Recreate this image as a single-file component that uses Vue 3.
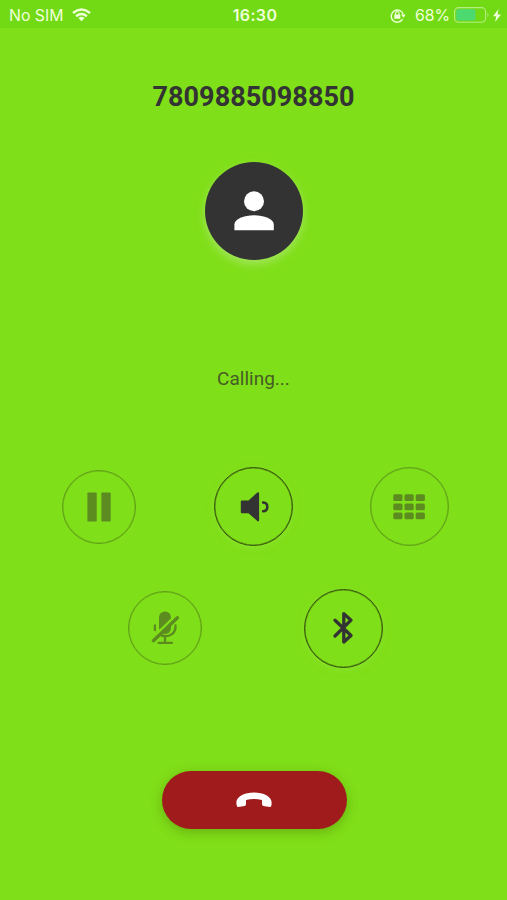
<script setup>
const phone = '7809885098850'
const keys = [0, 1, 2]
</script>

<template>
  <main class="screen">
    <header class="status">
      <div class="carrier">
        <span>No SIM</span>
        <svg class="wifi" viewBox="0 0 20 14" fill="none" stroke="currentColor" stroke-width="2.5">
          <path d="M1 4.9Q10-2.3 19 4.9M4.3 8.3Q10 3.7 15.7 8.3" />
          <path d="M6.7 10.2Q10 7.5 13.3 10.2L10 13.6Z" fill="currentColor" stroke="none" />
        </svg>
      </div>
      <strong class="clock">16:30</strong>
      <div class="power">
        <svg class="lock" viewBox="0 0 16 15" fill="none" stroke="currentColor">
          <path d="M12.6 11.2A6.1 6.1 0 1 1 13.2 6.4" stroke-width="1.4" />
          <path d="M11 6.5H15.6L13.5 9.8Z" fill="currentColor" stroke="none" />
          <rect x="4.3" y="6.5" width="6" height="4.3" rx=".6" fill="currentColor" stroke="none" />
          <path d="M5.5 7V5.4a1.8 1.8 0 0 1 3.6 0V7" stroke-width="1.1" />
        </svg>
        <span class="percent">68%</span>
        <svg class="battery" viewBox="0 0 36 16">
          <rect x=".6" y=".6" width="31" height="14.6" rx="4" fill="none" stroke="#b5ed83" stroke-width="1.1" />
          <rect x="2.3" y="2.3" width="19.2" height="11.2" rx="2" fill="#4cda70" />
          <path d="M33.5 5.5q2 2.3 0 4.8z" fill="#b5ed83" />
        </svg>
        <svg class="bolt" viewBox="0 0 8 13"><path d="M5.6 0L0 7.2H3.2L2.1 13L8 5.5H4.6Z" fill="currentColor" /></svg>
      </div>
    </header>

    <h1 class="number">{{ phone }}</h1>

    <div class="avatar">
      <svg viewBox="0 0 40 40" fill="#fff">
        <circle cx="20" cy="10.2" r="10" />
        <path d="M.4 39.2V33.4C.4 28 10 24.2 20 24.2S39.8 28 39.8 33.4V39.2Z" />
      </svg>
    </div>

    <p class="state">Calling...</p>

    <div class="controls first">
      <button class="control small dim" aria-label="Hold">
        <svg viewBox="0 0 40 40"><rect x="8.4" y="5.4" width="9.3" height="29.2" rx=".8" /><rect x="22.4" y="5.4" width="9.3" height="29.2" rx=".8" /></svg>
      </button>
      <button class="control" aria-label="Speaker">
        <svg viewBox="0 0 40 40">
          <path d="M6.8 14.6Q6.8 13.6 7.8 13.6H14.5L23.3 5.5Q25.1 4.5 25.1 6.3V33Q25.1 35.1 23.3 34L14.5 26.3H7.8Q6.8 26.3 6.8 25.3Z" />
          <path d="M29.1 15.4Q33.3 15.5 33.3 19.8T29.1 24.2" class="line" stroke-width="2.5" />
        </svg>
      </button>
      <button class="control dim" aria-label="Keypad">
        <svg viewBox="0 0 40 40">
          <template v-for="row in keys" :key="row">
            <rect v-for="col in keys" :key="col" :x="4.3 + col * 11.2" :y="7.3 + row * 9.1" width="9.2" height="6.8" rx="1.5" />
          </template>
        </svg>
      </button>
    </div>

    <div class="controls second">
      <button class="control small dim" aria-label="Mute">
        <svg viewBox="0 0 40 40">
          <rect x="14" y="3.5" width="12" height="22.5" rx="6" />
          <path d="M9.9 17.5V22.2M30.5 17.5C31 25.5 24 30 16.5 27.4M20 28.5V34M13.6 34.8H27" class="line" stroke-width="2.3" />
          <path d="M6.8 31.2L31.2 7.8" class="line gap" stroke-width="3.4" stroke-linecap="butt" />
          <path d="M8.4 32.7L32.4 9.7" class="line" stroke-width="3.3" stroke-linecap="butt" />
        </svg>
      </button>
      <button class="control" aria-label="Bluetooth">
        <svg viewBox="0 0 40 40">
          <path d="M12 12.2L28 27.5L20.8 34V5.6L28 12.2L12 28" class="line" stroke-width="3.3" />
        </svg>
      </button>
    </div>

    <button class="hangup" aria-label="End call">
      <svg viewBox="0 0 36 16" fill="#fff">
        <path d="M.4 10.7C.2 4.6 8.4.5 18 .5S35.8 4.6 35.6 10.7Q35.7 14.8 34 15L27.3 13.9Q26 13.6 26 12.2V8.1Q18 5.8 10 8.1V12.2Q10 13.6 8.7 13.9L2 15Q.5 14.8 .4 10.7Z" />
      </svg>
    </button>
  </main>
</template>

<style>
body { margin: 0; background: #7fdf18; }
</style>

<style scoped>
.screen {
  box-sizing: border-box;
  width: 507px;
  height: 900px;
  overflow: hidden;
  display: flex;
  flex-direction: column;
  align-items: center;
  background: #7fdf18;
  font-family: Roboto, sans-serif;
  color: #333;
}
.status {
  box-sizing: border-box;
  width: 100%;
  height: 28px;
  flex: none;
  display: grid;
  grid-template-columns: 1fr auto 1fr;
  align-items: center;
  padding: 2px 6px 0 9px;
  background: #72da15;
  color: #efffd9;
  font: 16px/26px Inter, sans-serif;
}
.carrier, .power { display: flex; align-items: center; }
.carrier { gap: 9px; font-size: 15.8px; padding-top: 1px; }
.carrier .wifi { margin-top: -2px; }
.power { justify-content: flex-end; }
.wifi { width: 19px; height: 14px; }
.clock { font-size: 16px; font-weight: 600; letter-spacing: .35px; padding-bottom: 1px; }
.lock { width: 16px; height: 15px; margin-right: 9px; margin-top: -1px; }
.percent { margin-right: 4px; font-size: 15.8px; }
.battery { width: 36px; height: 16px; margin-right: 3px; margin-top: -1px; }
.bolt { width: 8px; height: 13px; margin-top: -1px; }
.number {
  margin: 51px 0 0;
  font-size: 27px;
  line-height: 36px;
  font-weight: 700;
  letter-spacing: .05px;
}
.avatar {
  width: 98px;
  height: 98px;
  flex: none;
  margin: 46.5px 0 0 1px;
  border-radius: 50%;
  background: #333;
  display: flex;
  align-items: center;
  justify-content: center;
  box-shadow: 0 4px 10px rgba(190, 235, 145, .6);
}
.avatar svg { width: 40px; height: 40px; }
.state {
  margin: 107.5px 0 0;
  font-size: 19px;
  line-height: 24px;
  color: #465c25;
}
.controls { display: flex; align-items: center; flex: none; height: 79px; }
.first { gap: 76.5px; margin: 76px 0 0 3.5px; }
.first .small { margin-right: 1.5px; }
.second { gap: 102px; margin: 42.5px 0 0 3px; }
.control {
  box-sizing: border-box;
  width: 79px;
  height: 79px;
  flex: none;
  padding: 0;
  display: flex;
  align-items: center;
  justify-content: center;
  border: 1px solid #36500f;
  border-radius: 50%;
  background: transparent;
  color: #333;
  box-shadow: inset 0 0 0 .5px rgba(54, 80, 15, .6), 0 2px 7px rgba(150, 232, 65, .5);
}
.small { width: 74px; height: 74px; }
.dim {
  border-color: #609e19;
  color: #5c8b20;
  box-shadow: inset 0 0 0 .5px rgba(96, 158, 25, .6);
}
.control svg { width: 40px; height: 40px; flex: none; fill: currentColor; }
.control .line { fill: none; stroke: currentColor; stroke-linecap: round; stroke-linejoin: round; }
.control .gap { stroke: #7fdf18; }
.hangup {
  width: 185px;
  height: 58px;
  flex: none;
  margin: 103px 0 0 1px;
  padding: 0;
  display: flex;
  align-items: center;
  justify-content: center;
  border: 0;
  border-radius: 29px;
  background: #a01c1c;
  box-shadow: 0 3px 12px rgba(70, 90, 10, .35);
}
.hangup svg { width: 36px; height: 16px; }
</style>
